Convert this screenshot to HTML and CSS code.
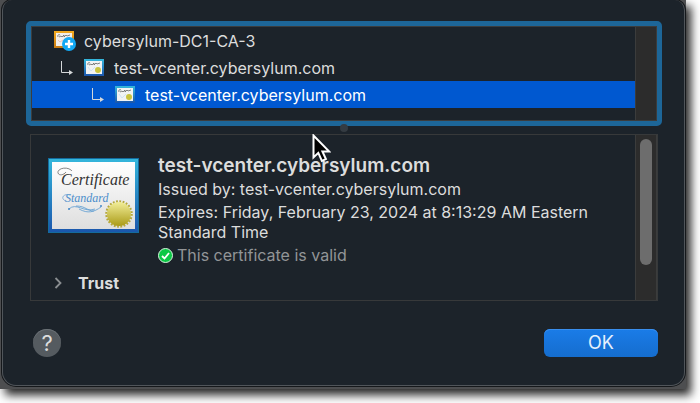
FILE: index.html
```html
<!DOCTYPE html>
<html lang="en">
<head>
    <meta charset="UTF-8">
    <title>Certificate</title>
    <link rel="stylesheet" href="styles.css">
</head>
<body>
    <!-- Shared icons -->
    <svg class="defs" width="0" height="0" aria-hidden="true">
        <defs>
            <linearGradient id="blue-frame" x1="0" y1="0" x2="0" y2="1">
                <stop offset="0" stop-color="#35b8dc"/>
                <stop offset="1" stop-color="#1a55ac"/>
            </linearGradient>
            <linearGradient id="gold-frame" x1="0" y1="0" x2="0" y2="1">
                <stop offset="0" stop-color="#f3ab20"/>
                <stop offset="1" stop-color="#c87a12"/>
            </linearGradient>
            <linearGradient id="paper" x1="0" y1="0" x2="0" y2="1">
                <stop offset="0" stop-color="#ffffff"/>
                <stop offset="1" stop-color="#dedede"/>
            </linearGradient>
            <linearGradient id="seal" x1="0" y1="0" x2="0" y2="1">
                <stop offset="0" stop-color="#f2ee98"/>
                <stop offset="1" stop-color="#aa9b18"/>
            </linearGradient>
            <symbol id="arrow" viewBox="0 0 13 15">
                <path d="M1.500 1v11.500h8" fill="none" stroke="currentColor"/>
                <path d="M9 10l4 2.500-4 2.500z" fill="currentColor"/>
            </symbol>
            <symbol id="cert-small" viewBox="0 0 20 17">
                <rect width="20" height="17" fill="url(#blue-frame)"/>
                <rect x="2" y="2" width="16" height="13" fill="#f1f3f3"/>
                <path d="M4 6c-1-2 1-3 2-2M5 6l2-1 1 1 2-2v2l2-2 1 1 3-1" fill="none" stroke="#666" stroke-width=".8"/>
                <path d="M4 8l3 4 4-4" fill="none" stroke="#cfe3f3"/>
                <circle cx="14" cy="11" r="3" fill="#c9c33e"/>
            </symbol>
        </defs>
    </svg>

    <div class="desktop">
        <main class="window">
            <section class="tree">
                <ul class="tree-list" role="tree">
                    <li class="tree-row" role="treeitem">
                        <svg class="root-icon" viewBox="0 0 23 20">
                            <rect width="20" height="17" fill="url(#gold-frame)"/>
                            <rect x="2" y="2" width="16" height="13" fill="#f3efeb"/>
                            <path d="M4 6c-1-2 1-3 2-2M5 6l2-1 1 1 2-2v2l2-2 1 1 3-1" fill="none" stroke="#666" stroke-width=".8"/>
                            <path d="M4 9l2 2 3-2" fill="none" stroke="#edc3ba"/>
                            <circle cx="15" cy="13" r="7" fill="#12a9f5"/>
                            <path d="M15 9v8M11 13h8" stroke="#fff" stroke-width="2.400"/>
                        </svg>
                        <span>cybersylum-DC1-CA-3</span>
                    </li>
                    <li class="tree-row level-2" role="treeitem">
                        <svg class="arrow"><use href="#arrow"/></svg>
                        <svg class="cert-icon"><use href="#cert-small"/></svg>
                        <span>test-vcenter.cybersylum.com</span>
                    </li>
                    <li class="tree-row level-3 selected" role="treeitem" aria-selected="true">
                        <svg class="arrow"><use href="#arrow"/></svg>
                        <svg class="cert-icon"><use href="#cert-small"/></svg>
                        <span>test-vcenter.cybersylum.com</span>
                    </li>
                </ul>
                <div class="track"></div>
            </section>

            <div class="splitter">
                <svg class="cursor" viewBox="0 0 19 29">
                    <path d="M1.500 1.500v22l4.800-4.600 3.600 8 4-1.800-3.500-7.700h6.600z" fill="#000" stroke="#fff" stroke-width="2"/>
                </svg>
            </div>

            <section class="details">
                <div class="details-body">
                    <div class="summary">
                        <svg class="certificate" viewBox="0 0 91 75" aria-hidden="true">
                            <rect width="91" height="75" fill="url(#blue-frame)"/>
                            <rect x=".5" y=".5" width="90" height="74" fill="none" stroke="#146b9d"/>
                            <rect x="4" y="4" width="83" height="67" fill="url(#paper)"/>
                            <text class="cert-title" x="13" y="27">Certificate</text>
                            <path d="M24 13c-4-5-15-3-14 2 1 3 6 2 8-1" fill="none" stroke="#555" stroke-width=".7"/>
                            <text class="cert-kind" x="17" y="44">Standard</text>
                            <path d="M22 37c-7-2-10 4-4 6" fill="none" stroke="#5b9bd0" stroke-width=".7"/>
                            <path d="M21 51c7-7 15 4 26 0M31 51c9 5 15 3 22-2M28 48c10 0 11 5 18 5" fill="none" stroke="#5b9bd0" stroke-width=".8"/>
                            <circle cx="21" cy="51" r="1" fill="#4287c7"/>
                            <circle cx="53" cy="48" r="1" fill="#4287c7"/>
                            <circle cx="71" cy="56" r="12.500" fill="none" stroke="#b5a83a" stroke-width="2.500" stroke-dasharray="1.800 1.470"/>
                            <circle cx="71" cy="56" r="12" fill="url(#seal)"/>
                        </svg>
                        <div class="info">
                            <h1>test-vcenter.cybersylum.com</h1>
                            <p class="issuer">Issued by: test-vcenter.cybersylum.com</p>
                            <p class="expires">Expires: Friday, February 23, 2024 at 8:13:29 AM Eastern Standard Time</p>
                            <p class="status">
                                <svg class="check" viewBox="0 0 15 15">
                                    <circle cx="7.500" cy="7.500" r="7" fill="#0bc845" stroke="#d8f5df"/>
                                    <path d="M4 8l2.500 2.500L11 5" fill="none" stroke="#fff" stroke-width="1.800"/>
                                </svg>
                                <span>This certificate is valid</span>
                            </p>
                        </div>
                    </div>
                    <button class="trust" type="button" aria-expanded="false">
                        <svg class="chevron" viewBox="0 0 8 12">
                            <path d="M1.500 1l5 5-5 5" fill="none" stroke="currentColor" stroke-width="1.800"/>
                        </svg>
                        <span>Trust</span>
                    </button>
                </div>
                <div class="track">
                    <div class="thumb"></div>
                </div>
            </section>

            <footer class="actions">
                <button class="help" type="button" aria-label="Help">?</button>
                <button class="ok" type="button">OK</button>
            </footer>
        </main>
    </div>
</body>
</html>
```

FILE: styles.css
```css
* {
    box-sizing: border-box;
}
body {
    margin: 0;
    background: #fff;
    color: #dcdddd;
    font-family: Inter, "Liberation Sans", sans-serif;
    font-size: 16px;
    line-height: 20px;
    overflow: hidden;
}
h1, p, ul {
    margin: 0;
    padding: 0;
}
button {
    border: none;
    padding: 0;
    font-family: inherit;
    color: inherit;
}
svg {
    flex: none;
}
.defs {
    position: absolute;
}
.desktop {
    margin: 0 14px 14px 0;
    padding: 0 1px 3px 2px;
    background: #4d4e50;
    box-shadow: 5px 6px 9px rgba(0, 0, 0, 0.85);
}
.window {
    padding: 21px 23px 28px 23px;
    background: #1c232a;
    border: 1px solid #50555a;
    border-top: none;
    border-radius: 10px 10px 14px 14px;
    box-shadow: 0 0 0 1px #15181b;
}

/* Certificate chain */
.tree {
    display: flex;
    border: 5px solid #1d6698;
    border-radius: 5px;
    margin: 0 -1px 0 0;
}
.tree-list {
    flex: 1;
    list-style: none;
    padding-bottom: 12px;
    border: 1px solid #3b3d3e;
    border-right: none;
}
.tree-row {
    display: flex;
    align-items: center;
    height: 27px;
    padding-left: 22px;
}
.root-icon {
    width: 23px;
    height: 20px;
    margin-right: 7px;
}
.level-2 {
    padding-left: 28px;
}
.level-3 {
    padding-left: 59px;
}
.selected {
    background: #0058d0;
    color: #fff;
}
.arrow {
    width: 13px;
    height: 15px;
    margin-right: 11px;
    color: #d5d8da;
}
.cert-icon {
    width: 20px;
    height: 17px;
    margin-right: 10px;
}
.track {
    width: 22px;
    background: #2c2c2c;
    border: 1px solid #3b3c3c;
}

.splitter {
    position: relative;
    width: 8px;
    height: 8px;
    margin: -2px auto 2px;
    border-radius: 50%;
    background: #343b42;
}
.cursor {
    position: absolute;
    left: -28px;
    top: 10px;
    width: 19px;
    height: 29px;
}

/* Details */
.details {
    display: flex;
    margin: 0 3px 0 4px;
    border: 1px solid #37393a;
}
.details-body {
    flex: 1;
    padding: 20px 36px 7px 17px;
}
.summary {
    display: flex;
    gap: 19px;
}
.certificate {
    width: 91px;
    height: 75px;
    margin-top: 3px;
}
.cert-title {
    font: italic 16px "Liberation Serif", serif;
    fill: #333;
}
.cert-kind {
    font: italic 12px "Liberation Serif", serif;
    fill: #4b8dcb;
}
h1 {
    font-size: 19px;
    font-weight: 600;
    line-height: 22px;
}
.issuer {
    margin: 2px 0 3px;
}
.status {
    display: flex;
    align-items: center;
    gap: 4px;
    margin-top: 3px;
    color: #929597;
}
.check {
    width: 15px;
    height: 15px;
}
.trust {
    display: flex;
    align-items: center;
    gap: 16px;
    margin-top: 8px;
    padding-left: 6px;
    background: none;
    font-size: 16px;
    font-weight: 700;
    line-height: 20px;
}
.chevron {
    width: 8px;
    height: 12px;
    color: #8a8e91;
}
.details .track {
    padding: 4px;
    border-width: 0 1px;
}
.thumb {
    width: 12px;
    height: 126px;
    border-radius: 6px;
    background: #6d6d6d;
}

/* Buttons */
.actions {
    display: flex;
    justify-content: space-between;
    align-items: center;
    margin: 28px 3px 0 7px;
}
.help {
    width: 28px;
    height: 28px;
    border-radius: 50%;
    background: #555b60;
    box-shadow: inset 0 1px 0 #6a7075;
    font-size: 22px;
    line-height: 28px;
}
.ok {
    width: 114px;
    height: 28px;
    border-radius: 6px;
    background: linear-gradient(#1a7ce8, #156dce);
    box-shadow: inset 0 1px 0 #3a8fee;
    color: #e6f0fc;
    font-size: 18px;
    line-height: 28px;
}
```
